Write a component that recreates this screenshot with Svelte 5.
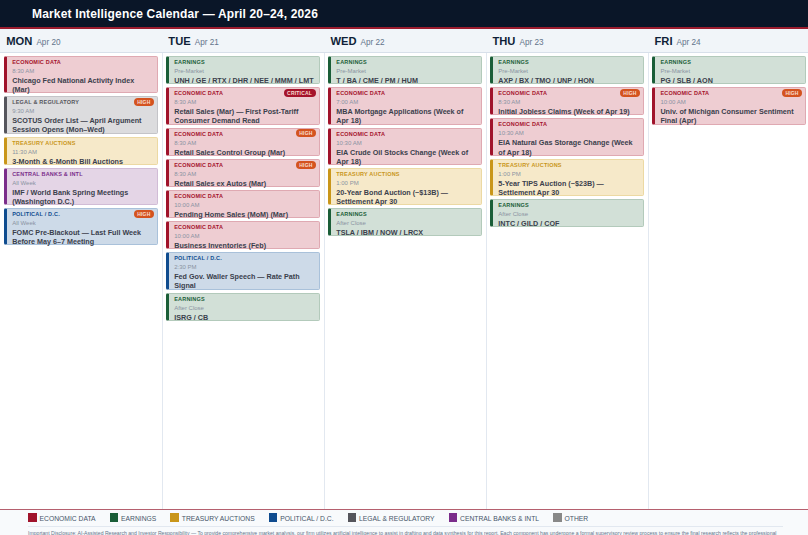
<script>
    const types = {
        econ: { label: 'ECONOMIC DATA', cls: 'econ' },
        earn: { label: 'EARNINGS', cls: 'earn' },
        tsy: { label: 'TREASURY AUCTIONS', cls: 'tsy' },
        pol: { label: 'POLITICAL / D.C.', cls: 'pol' },
        legal: { label: 'LEGAL & REGULATORY', cls: 'legal' },
        cb: { label: 'CENTRAL BANKS & INTL', cls: 'cb' },
        other: { label: 'OTHER', cls: 'other' }
    };

    const legend = Object.values(types);

    const days = [
        {
            name: 'MON',
            date: 'Apr 20',
            events: [
                { type: 'econ', time: '8:30 AM', title: 'Chicago Fed National Activity Index (Mar)' },
                { type: 'legal', time: '9:30 AM', title: 'SCOTUS Order List — April Argument Session Opens (Mon–Wed)', badge: 'HIGH' },
                { type: 'tsy', time: '11:30 AM', title: '3-Month & 6-Month Bill Auctions' },
                { type: 'cb', time: 'All Week', title: 'IMF / World Bank Spring Meetings (Washington D.C.)' },
                { type: 'pol', time: 'All Week', title: 'FOMC Pre-Blackout — Last Full Week Before May 6–7 Meeting', badge: 'HIGH' }
            ]
        },
        {
            name: 'TUE',
            date: 'Apr 21',
            events: [
                { type: 'earn', time: 'Pre-Market', title: 'UNH / GE / RTX / DHR / NEE / MMM / LMT' },
                { type: 'econ', time: '8:30 AM', title: 'Retail Sales (Mar) — First Post-Tariff Consumer Demand Read', badge: 'CRITICAL' },
                { type: 'econ', time: '8:30 AM', title: 'Retail Sales Control Group (Mar)', badge: 'HIGH' },
                { type: 'econ', time: '8:30 AM', title: 'Retail Sales ex Autos (Mar)', badge: 'HIGH' },
                { type: 'econ', time: '10:00 AM', title: 'Pending Home Sales (MoM) (Mar)' },
                { type: 'econ', time: '10:00 AM', title: 'Business Inventories (Feb)' },
                { type: 'pol', time: '2:30 PM', title: 'Fed Gov. Waller Speech — Rate Path Signal' },
                { type: 'earn', time: 'After Close', title: 'ISRG / CB' }
            ]
        },
        {
            name: 'WED',
            date: 'Apr 22',
            events: [
                { type: 'earn', time: 'Pre-Market', title: 'T / BA / CME / PM / HUM' },
                { type: 'econ', time: '7:00 AM', title: 'MBA Mortgage Applications (Week of Apr 18)' },
                { type: 'econ', time: '10:30 AM', title: 'EIA Crude Oil Stocks Change (Week of Apr 18)' },
                { type: 'tsy', time: '1:00 PM', title: '20-Year Bond Auction (~$13B) — Settlement Apr 30' },
                { type: 'earn', time: 'After Close', title: 'TSLA / IBM / NOW / LRCX' }
            ]
        },
        {
            name: 'THU',
            date: 'Apr 23',
            events: [
                { type: 'earn', time: 'Pre-Market', title: 'AXP / BX / TMO / UNP / HON' },
                { type: 'econ', time: '8:30 AM', title: 'Initial Jobless Claims (Week of Apr 19)', badge: 'HIGH' },
                { type: 'econ', time: '10:30 AM', title: 'EIA Natural Gas Storage Change (Week of Apr 18)' },
                { type: 'tsy', time: '1:00 PM', title: '5-Year TIPS Auction (~$23B) — Settlement Apr 30' },
                { type: 'earn', time: 'After Close', title: 'INTC / GILD / COF' }
            ]
        },
        {
            name: 'FRI',
            date: 'Apr 24',
            events: [
                { type: 'earn', time: 'Pre-Market', title: 'PG / SLB / AON' },
                { type: 'econ', time: '10:00 AM', title: 'Univ. of Michigan Consumer Sentiment Final (Apr)', badge: 'HIGH' }
            ]
        }
    ];
</script>

<div class="page">
    <header class="top">
        <h1>Market Intelligence Calendar — April 20–24, 2026</h1>
    </header>

    <div class="week">
        {#each days as day}
            <div class="day">
                <div class="day-head">
                    <span class="day-name">{day.name}</span>
                    <span class="day-date">{day.date}</span>
                </div>
                <div class="day-body">
                    {#each day.events as ev}
                        <div class="card {types[ev.type].cls}">
                            {#if ev.badge}
                                <span class="badge" class:critical={ev.badge === 'CRITICAL'}>{ev.badge}</span>
                            {/if}
                            <div class="tag">{types[ev.type].label}</div>
                            <div class="time">{ev.time}</div>
                            <div class="title">{ev.title}</div>
                        </div>
                    {/each}
                </div>
            </div>
        {/each}
    </div>

    <footer class="foot">
        <div class="legend">
            {#each legend as item}
                <span class="legend-item {item.cls}"><i class="swatch"></i>{item.label}</span>
            {/each}
        </div>
        <p class="disclosure">Important Disclosure: AI-Assisted Research and Investor Responsibility — To provide comprehensive market analysis, our firm utilizes artificial intelligence to assist in drafting and data synthesis for this report. Each component has undergone a formal supervisory review process to ensure the final research reflects the professional</p>
    </footer>
</div>

<style>
    :global(body) {
        margin: 0;
        background: #ffffff;
    }

    .page {
        height: 535px;
        width: 808px;
        overflow: hidden;
        display: flex;
        flex-direction: column;
        font-family: "Liberation Sans", Arial, sans-serif;
    }

    .top {
        height: 27px;
        flex-shrink: 0;
        background: #0a1628;
        border-bottom: 2px solid #9b1c2e;
        display: flex;
        align-items: center;
        padding-left: 32px;
    }

    h1 {
        margin: 0;
        font-size: 12px;
        font-weight: 700;
        color: #ffffff;
        letter-spacing: 0.16px;
        white-space: nowrap;
    }

    .week {
        flex: 1;
        min-height: 0;
        display: grid;
        grid-template-columns: repeat(5, 162.05px);
    }

    .day {
        display: flex;
        flex-direction: column;
        border-left: 1px solid #e2e8f0;
        box-sizing: border-box;
    }

    .day:first-child {
        border-left-color: transparent;
    }

    .day-head {
        height: 24px;
        box-sizing: border-box;
        background: #f1f5f9;
        border-bottom: 1px solid #d8e0ea;
        margin-left: -1px;
        padding: 5.5px 0 0 6.3px;
        display: flex;
        align-items: baseline;
        gap: 4px;
    }

    .day-name {
        font-size: 11.2px;
        font-weight: 700;
        color: #0f1f38;
    }

    .day-date {
        font-size: 8.2px;
        color: #64748b;
    }

    .day-body {
        padding: 3px 4.05px 0 3px;
        display: flex;
        flex-direction: column;
        gap: 3px;
    }

    .card {
        position: relative;
        box-sizing: border-box;
        border: 1px solid;
        border-left: 3.5px solid;
        border-radius: 2px;
        padding: 1px 4.8px 0 5.2px;
    }

    .tag {
        font-size: 5.5px;
        font-weight: 700;
        letter-spacing: 0.2px;
        line-height: 9px;
        height: 9px;
    }

    .time {
        font-size: 6px;
        color: #8a93a2;
        line-height: 9px;
        height: 9px;
    }

    .title {
        font-size: 7.2px;
        font-weight: 700;
        color: #3a404c;
        line-height: 9.1px;
        margin-bottom: -1.9px;
    }

    .badge {
        position: absolute;
        top: 0.8px;
        right: 3.5px;
        font-size: 5px;
        font-weight: 700;
        line-height: 8px;
        color: #f8ddd0;
        background: #d4531f;
        border-radius: 4px;
        padding: 0 3px;
        letter-spacing: 0.2px;
    }

    .badge.critical {
        background: #a5132b;
        padding: 0 3.5px;
    }

    .econ { background: #eecdd2; border-color: #dfa9b2; border-left-color: #a0132b; }
    .econ .tag { color: #a5132b; }
    .earn { background: #d2e0d7; border-color: #b3cabb; border-left-color: #1a5e38; }
    .earn .tag { color: #1a5e38; }
    .tsy { background: #f6e9c9; border-color: #ecd9a3; border-left-color: #c9961a; }
    .tsy .tag { color: #c9961a; }
    .pol { background: #cddae8; border-color: #a9c1da; border-left-color: #0f4c8f; }
    .pol .tag { color: #0f4c8f; }
    .legal { background: #dcdcde; border-color: #c4c4c8; border-left-color: #55555c; }
    .legal .tag { color: #55555c; }
    .cb { background: #e4d5e6; border-color: #d1bcd6; border-left-color: #7b2d8b; }
    .cb .tag { color: #7b2d8b; }

    .foot {
        flex-shrink: 0;
        height: 26px;
        box-sizing: border-box;
        border-top: 1.5px solid #b5606e;
        background: #f8fafc;
        padding: 0 25px 0 28px;
        overflow: hidden;
    }

    .legend {
        height: 17px;
        box-sizing: border-box;
        display: flex;
        align-items: center;
        gap: 14px;
        border-bottom: 1px solid #e2e8f0;
    }

    .legend-item {
        display: flex;
        align-items: center;
        gap: 3px;
        font-size: 6.75px;
        color: #475569;
        background: none;
        white-space: nowrap;
    }

    .swatch {
        display: block;
        width: 8.5px;
        height: 8.5px;
        margin-top: -1.5px;
    }

    .legend-item.econ .swatch { background: #a0132b; }
    .legend-item.earn .swatch { background: #1a5e38; }
    .legend-item.tsy .swatch { background: #c9961a; }
    .legend-item.pol .swatch { background: #0f4c8f; }
    .legend-item.legal .swatch { background: #55555c; }
    .legend-item.cb .swatch { background: #7b2d8b; }
    .legend-item.other .swatch { background: #888888; }

    .disclosure {
        margin: 2.5px 0 0;
        font-size: 5.14px;
        line-height: 7px;
        color: #64748b;
        white-space: nowrap;
    }
</style>
